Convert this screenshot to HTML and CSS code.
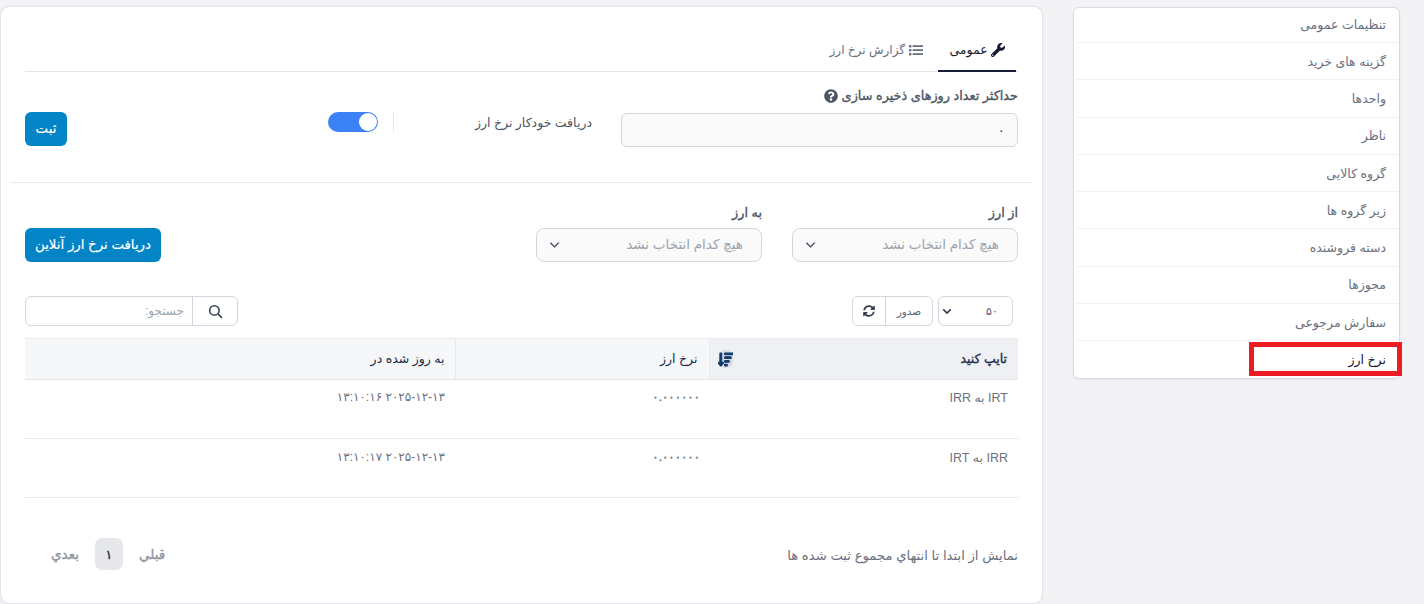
FILE: index.html
```html
<!DOCTYPE html>
<html lang="fa" dir="rtl">
<head>
<meta charset="utf-8">
<title>نرخ ارز</title>
<link rel="stylesheet" href="styles.css">
</head>
<body>
<div class="page">
  <nav class="side">
    <a class="side-item side-first">تنظیمات عمومی</a>
    <a class="side-item">گزینه های خرید</a>
    <a class="side-item">واحدها</a>
    <a class="side-item">ناظر</a>
    <a class="side-item">گروه کالایی</a>
    <a class="side-item">زیر گروه ها</a>
    <a class="side-item">دسته فروشنده</a>
    <a class="side-item">مجوزها</a>
    <a class="side-item">سفارش مرجوعی</a>
    <a class="side-item side-active">نرخ ارز<span class="mark"></span></a>
  </nav>
  <main class="card">
    <div class="tabs">
      <a class="tab tab-on">
        <svg class="ic-tab" viewBox="0 0 512 512"><path d="M507.73 109.1c-2.24-9.03-13.54-12.09-20.12-5.51l-74.36 74.36-67.88-11.31-11.31-67.88 74.36-74.36c6.62-6.62 3.43-17.9-5.66-20.16-47.38-11.74-99.55.91-136.58 37.93-39.64 39.64-50.55 97.1-34.05 147.2L18.74 402.76c-24.99 24.99-24.99 65.51 0 90.5 24.99 24.99 65.51 24.99 90.5 0l213.21-213.21c50.12 16.71 107.47 5.68 147.37-34.22 37.07-37.07 49.7-89.32 37.91-136.73zM64 472c-13.25 0-24-10.75-24-24 0-13.26 10.75-24 24-24s24 10.74 24 24c0 13.25-10.75 24-24 24z"/></svg>
        عمومی
      </a>
      <a class="tab tab-off">
        <svg class="ic-tab" viewBox="0 0 14 12"><rect x="0" y="1" width="2.4" height="2.4"/><rect x="0" y="5" width="2.4" height="2.4"/><rect x="0" y="9" width="2.4" height="2.4"/><rect x="3.6" y="1.2" width="10.4" height="1.8"/><rect x="3.6" y="5.2" width="10.4" height="1.8"/><rect x="3.6" y="9.2" width="10.4" height="1.8"/></svg>
        گزارش نرخ ارز
      </a>
    </div>

    <div class="settings">
      <div class="field-days">
        <label class="lbl">حداکثر تعداد روزهای ذخیره سازی
          <svg class="ic-help" viewBox="0 0 512 512"><path d="M504 256c0 136.997-111.043 248-248 248S8 392.997 8 256C8 119.083 119.043 8 256 8s248 111.083 248 248zM262.655 90c-54.497 0-89.255 22.957-116.549 63.758-3.536 5.286-2.353 12.415 2.715 16.258l34.699 26.31c5.205 3.947 12.621 3.008 16.665-2.122 17.864-22.658 30.113-35.797 57.303-35.797 20.429 0 45.698 13.148 45.698 32.958 0 14.976-12.363 22.667-32.534 33.976C247.128 238.528 216 254.941 216 296v4c0 6.627 5.373 12 12 12h56c6.627 0 12-5.373 12-12v-1.333c0-28.462 83.186-29.647 83.186-106.667 0-58.002-60.165-102-116.531-102zM256 338c-25.365 0-46 20.635-46 46 0 25.364 20.635 46 46 46s46-20.636 46-46c0-25.365-20.635-46-46-46z"/></svg>
        </label>
        <div class="input">۰</div>
      </div>
      <div class="auto">
        <span class="auto-label">دریافت خودکار نرخ ارز</span>
        <span class="auto-sep"></span>
        <span class="toggle"><span class="knob"></span></span>
      </div>
      <button class="btn btn-save">ثبت</button>
    </div>

    <hr class="rule">

    <div class="convert">
      <div class="pick">
        <label class="lbl">از ارز</label>
        <div class="select"><span>هیچ کدام انتخاب نشد</span><svg class="chev" viewBox="0 0 12 8"><path d="M1.5 1.5 6 6l4.5-4.5"/></svg></div>
      </div>
      <div class="pick">
        <label class="lbl">به ارز</label>
        <div class="select"><span>هیچ کدام انتخاب نشد</span><svg class="chev" viewBox="0 0 12 8"><path d="M1.5 1.5 6 6l4.5-4.5"/></svg></div>
      </div>
      <button class="btn btn-online">دریافت نرخ ارز آنلاین</button>
    </div>

    <div class="toolbar">
      <div class="tools-start">
        <div class="size"><span>۵۰</span><svg class="chev-bold" viewBox="0 0 12 8"><path d="M1.5 1.5 6 6l4.5-4.5"/></svg></div>
        <div class="group">
          <span class="group-cell export">صدور</span>
          <span class="group-cell refresh"><svg class="ic-sync" viewBox="0 0 512 512"><path d="M370.72 133.28C339.458 104.008 298.888 87.962 255.848 88c-77.458.068-144.328 53.178-162.791 126.85-1.344 5.363-6.122 9.15-11.651 9.15H24.103c-7.498 0-13.194-6.807-11.807-14.176C33.933 94.924 134.813 8 256 8c66.448 0 126.791 26.136 171.315 68.685L463.03 40.97C478.149 25.851 504 36.559 504 57.941V192c0 13.255-10.745 24-24 24H345.941c-21.382 0-32.09-25.851-16.971-40.971l41.75-41.749zM32 296h134.059c21.382 0 32.09 25.851 16.971 40.971l-41.75 41.75c31.262 29.273 71.835 45.319 114.876 45.28 77.418-.07 144.315-53.144 162.787-126.849 1.344-5.363 6.122-9.15 11.651-9.15h57.304c7.498 0 13.194 6.807 11.807 14.176C478.067 417.076 377.187 504 256 504c-66.448 0-126.791-26.136-171.315-68.685L48.97 471.03C33.851 486.149 8 475.441 8 454.059V320c0-13.255 10.745-24 24-24z"/></svg></span>
        </div>
      </div>
      <div class="search">
        <span class="search-btn"><svg class="ic-search" viewBox="0 0 16 16"><circle cx="6.8" cy="6.8" r="5"/><path d="m10.6 10.6 4.2 4.2"/></svg></span>
        <span class="search-input">جستجو:</span>
      </div>
    </div>

    <table class="grid">
      <thead>
        <tr>
          <th class="col-type">
            <div class="th-in">تایپ کنید
              <span class="sort"><svg viewBox="0 0 512 512"><path d="M304 416h-64a16 16 0 0 0-16 16v32a16 16 0 0 0 16 16h64a16 16 0 0 0 16-16v-32a16 16 0 0 0-16-16zm-128-64h-48V48a16 16 0 0 0-16-16H80a16 16 0 0 0-16 16v304H16c-14.19 0-21.37 17.24-11.29 27.31l80 96a16 16 0 0 0 22.62 0l80-96C197.35 369.26 190.22 352 176 352zm256-192H240a16 16 0 0 0-16 16v32a16 16 0 0 0 16 16h192a16 16 0 0 0 16-16v-32a16 16 0 0 0-16-16zm-64 128H240a16 16 0 0 0-16 16v32a16 16 0 0 0 16 16h128a16 16 0 0 0 16-16v-32a16 16 0 0 0-16-16zM496 32H240a16 16 0 0 0-16 16v32a16 16 0 0 0 16 16h256a16 16 0 0 0 16-16V48a16 16 0 0 0-16-16z"/></svg></span>
            </div>
          </th>
          <th class="col-rate">نرخ ارز</th>
          <th class="col-date">به روز شده در</th>
        </tr>
      </thead>
      <tbody>
        <tr><td>IRT به IRR</td><td class="cell-rate">۰.۰۰۰۰۰۰</td><td class="cell-date">۲۰۲۵-۱۲-۱۳ ۱۳:۱۰:۱۶</td></tr>
        <tr><td>IRR به IRT</td><td class="cell-rate">۰.۰۰۰۰۰۰</td><td class="cell-date">۲۰۲۵-۱۲-۱۳ ۱۳:۱۰:۱۷</td></tr>
      </tbody>
    </table>

    <div class="foot">
      <span class="foot-info">نمایش از ابتدا تا انتهاي مجموع ثبت شده ها</span>
      <div class="pager">
        <span class="pg">قبلي</span>
        <span class="pg-num">۱</span>
        <span class="pg">بعدي</span>
      </div>
    </div>
  </main>
</div>
</body>
</html>
```

FILE: styles.css
```css
* { box-sizing: border-box; }
html, body { margin: 0; height: 100%; }
body {
  background: #f3f3f5;
  font-family: "Liberation Sans", "DejaVu Sans", sans-serif;
  font-size: 12.5px;
  color: #5e6278;
  overflow: hidden;
}
.page {
  display: flex;
  align-items: flex-start;
  padding: 7px 24px 0 0;
  gap: 31px;
  height: 604px;
}
.side {
  width: 327px;
  flex: none;
  background: #fff;
  border: 1px solid #d9d9e3;
  border-radius: 6px;
  padding: 0 0 0 2px;
  display: flex;
  flex-direction: column;
  box-shadow: 0 1px 2px rgba(60, 60, 90, .08);
}
.side-item {
  display: flex;
  align-items: center;
  height: 37.3px;
  padding: 0 13px;
  border-bottom: 1px solid #f1f1f4;
  color: #6b7080;
  position: relative;
}
.side-first { height: 35px; padding-bottom: 2px; }
.side-active { border-bottom: 0; color: #14142b; height: 37px; }
.mark {
  position: absolute;
  top: 1px;
  right: -3px;
  width: 153px;
  height: 34px;
  border: 5px solid #ed1c24;
}
.card {
  width: 1041px;
  height: 596px;
  flex: none;
  background: #fff;
  border-radius: 8px;
  box-shadow: 0 0 2px rgba(60, 60, 90, .3);
  padding: 25px 24px 0 24px;
  display: flex;
  flex-direction: column;
}
.tabs {
  display: flex;
  height: 40px;
  border-bottom: 1px solid #e4e4ea;
  padding-right: 2px;
}
.tab {
  display: flex;
  align-items: center;
  gap: 3px;
  height: 39px;
  color: #6b7080;
  padding-bottom: 3px;
}
.tab-off { padding-right: 15px; font-size: 12px; gap: 4px; }
.tab-on {
  width: 78px;
  color: #181c32;
  border-bottom: 2px solid #181c32;
  height: 40px;
  justify-content: center;
}
.ic-tab { width: 14px; height: 14px; fill: currentColor; flex: none; }
.settings {
  display: flex;
  align-items: flex-start;
  margin-top: 14px;
  height: 96px;
}
.field-days { width: 397px; flex: none; }
.lbl {
  display: flex;
  align-items: center;
  gap: 4px;
  color: #4b5563;
  height: 19px;
  font-size: 12.8px;
  -webkit-text-stroke: .35px #4b5563;
}
.ic-help { width: 14px; height: 14px; fill: #4b5563; }
.input {
  margin-top: 8px;
  height: 34px;
  background: #fafafa;
  border: 1px solid #d5d5e0;
  border-radius: 6px;
  padding: 0 12px;
  display: flex;
  align-items: center;
  color: #4b5563;
  font-size: 14px;
}
.auto {
  display: flex;
  align-items: center;
  margin-top: 26px;
  height: 20px;
  width: 292px;
  padding-right: 29px;
  flex: none;
}
.auto-label { width: 198px; color: #4b5563; flex: none; }
.auto-sep { width: 1px; height: 20px; background: #e4e4ea; margin-left: 15px; flex: none; }
.toggle {
  width: 50px;
  height: 20px;
  border-radius: 10px;
  background: #3b82f6;
  flex: none;
  display: flex;
  align-items: center;
  padding: 0 1px;
}
.knob { width: 18px; height: 18px; border-radius: 50%; background: #fff; }
.btn {
  border: 0;
  font: inherit;
  font-size: 13.3px;
  color: #fff;
  -webkit-text-stroke: .2px #fff;
  background: #0284c7;
  border-radius: 6px;
  height: 34px;
  padding: 0 0 2px;
}
.btn-save { width: 42px; margin-top: 26px; margin-right: auto; }
.rule {
  border: 0;
  border-top: 1px solid #e9eaee;
  margin: 0 -14px 0 -15px;
}
.convert {
  display: flex;
  align-items: flex-end;
  gap: 30px;
  margin-top: 20px;
  height: 59px;
}
.pick { width: 226px; flex: none; }
.pick .lbl { margin-bottom: 6px; }
.select {
  height: 34px;
  background: #fafafa;
  border: 1px solid #d5d5e0;
  border-radius: 8px;
  padding: 0 18px 2px 12px;
  display: flex;
  align-items: center;
  justify-content: space-between;
  color: #9ca3af;
  font-size: 13.5px;
}
.chev { width: 11px; height: 8px; flex: none; fill: none; stroke: #374151; stroke-width: 1.3; margin-top: 2px; }
.btn-online { width: 136px; margin-right: auto; }
.toolbar {
  display: flex;
  justify-content: space-between;
  margin-top: 34px;
  height: 30px;
  padding-right: 5px;
}
.tools-start { display: flex; gap: 5px; }
.size {
  width: 75px;
  height: 30px;
  border: 1px solid #d5d5e0;
  border-radius: 6px;
  display: flex;
  align-items: center;
  justify-content: space-between;
  padding: 0 14px 0 3px;
  font-size: 11.5px;
  background: #fff;
}
.chev-bold { width: 10px; height: 7px; flex: none; fill: none; stroke: #374151; stroke-width: 2; }
.group {
  display: flex;
  width: 81px;
  height: 30px;
  border: 1px solid #d5d5e0;
  border-radius: 6px;
}
.group-cell { display: flex; align-items: center; justify-content: center; }
.export { width: 47px; border-left: 1px solid #d5d5e0; font-size: 10.5px; }
.refresh { flex: 1; }
.ic-sync { width: 12px; height: 12px; fill: #374151; }
.search {
  display: flex;
  width: 213px;
  height: 30px;
  border: 1px solid #d5d5e0;
  border-radius: 6px;
}
.search-btn {
  width: 45px;
  flex: none;
  display: flex;
  align-items: center;
  justify-content: center;
  border-left: 1px solid #d5d5e0;
}
.search-input {
  flex: 1;
  padding: 0 8px;
  display: flex;
  align-items: center;
  color: #9ca3af;
  font-size: 12px;
}
.ic-search { width: 15px; height: 15px; fill: none; stroke: #374151; stroke-width: 1.7; }
.grid {
  width: 993px;
  table-layout: fixed;
  border-collapse: collapse;
  margin: 12px 0 0 auto;
}
.grid th {
  height: 41px;
  background: #f6f7f9;
  border-top: 1px solid #eaebef;
  border-bottom: 1px solid #e4e4ea;
  border-left: 1px solid #eaebef;
  padding: 0 11px 2px;
  text-align: right;
  font-weight: 400;
  color: #1a2b4c;
}
.grid th:last-child { border-left: 0; padding-right: 10px; }
.col-type { width: 309px; }
.col-rate { width: 254px; }
.grid th.col-type {
  background: #eef0f3;
  color: #1a2b4c;
  -webkit-text-stroke: .35px #1a2b4c;
  padding-left: 9px;
}
.th-in { display: flex; align-items: center; justify-content: space-between; }
.sort {
  width: 14px;
  height: 18px;
  border-radius: 7px;
  background: #d8dbe1;
  display: flex;
  align-items: center;
  justify-content: center;
  margin-top: 2px;
}
.sort svg { width: 15px; height: 15px; flex: none; fill: #123a6b; stroke: #123a6b; stroke-width: 36; }
.grid td {
  height: 59px;
  vertical-align: top;
  padding: 10px 10px 0;
  border-bottom: 1px solid #e9eaee;
  color: #6b7080;
}
.grid tr + tr td { padding-top: 11px; }
.grid td.cell-rate { font-size: 11.8px; padding-right: 9px; -webkit-text-stroke: .4px #6b7080; }
.grid td.cell-date { font-size: 12px; }
.foot {
  display: flex;
  justify-content: space-between;
  align-items: center;
  margin-top: 40px;
  height: 32px;
}
.foot-info { color: #6b7080; font-size: 13.2px; padding-top: 2px; }
.pager { display: flex; align-items: center; margin-left: 26px; gap: 16px; }
.pg { color: #9097a3; -webkit-text-stroke: .35px #9097a3; font-size: 13.5px; }
.pg-num {
  width: 28px;
  height: 32px;
  border-radius: 7px;
  background: #e5e7eb;
  color: #1a2b4c;
  display: flex;
  align-items: center;
  justify-content: center;
  -webkit-text-stroke: .35px #1a2b4c;
}
```
